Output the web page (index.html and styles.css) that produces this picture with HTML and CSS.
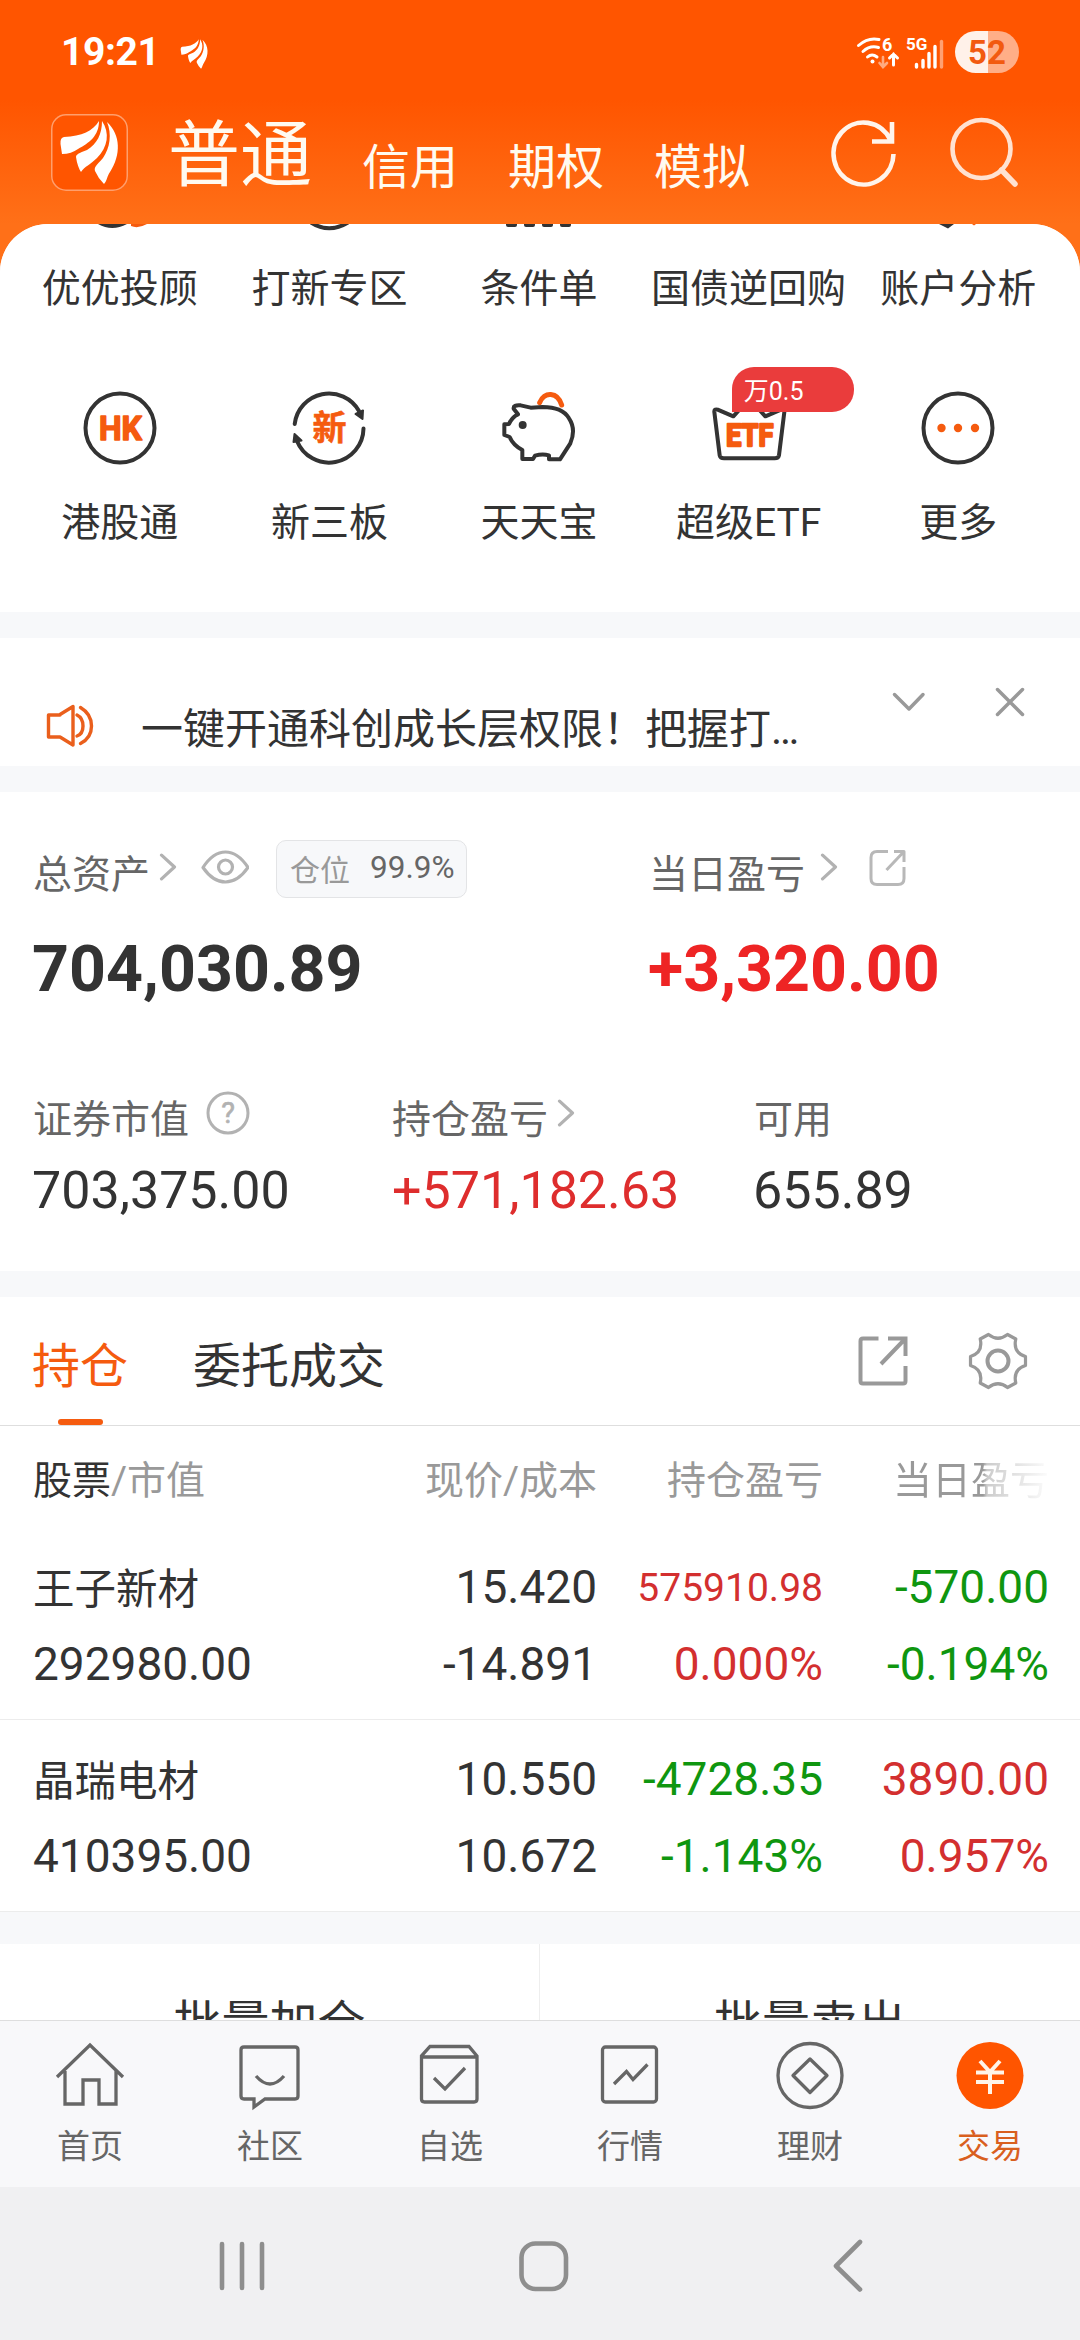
FILE: index.html
```html
<!DOCTYPE html>
<html lang="zh-CN">
<head>
<meta charset="utf-8">
<title>交易</title>
<link rel="stylesheet" href="styles.css">
</head>
<body>
<svg width="0" height="0" class="defs">
  <symbol id="petals" viewBox="0 0 77 77"><path d="M48 7C42 17 31 22 13 23Q9 23.500 9.500 30L11 40C17 40 23 38 27 35C38 29 48 22 48 7ZM51 7C51 20 46 30 36 36Q24 40 25 43C26 50 28 55 30 58C34 52 39 51 46 44C57 33 59 19 51 7ZM56 8C61 20 59 34 52 44C45 52 43 53 44 57Q47 64 53 70C56 67 56 62 59 58C70 41 70 21 56 8Z"/></symbol>
  <symbol id="chevron" viewBox="0 0 16 26"><path d="M2 2L14 13L2 24" fill="none" stroke="#b2b2b2" stroke-width="3" stroke-linecap="round" stroke-linejoin="round"/></symbol>
</svg>
<div class="screen">
  <header class="header">
    <div class="status">
      <span class="time">19:21</span>
      <svg class="status-logo" viewBox="8 5 62 67" fill="#fff"><use href="#petals" width="77" height="77"/></svg>
      <svg class="signals" width="100" height="42" viewBox="850 31 100 42" fill="none" stroke="#fff" stroke-linecap="round">
        <path d="M858.500 45.500Q868 37 879 39.500M863 51.500Q870 45 878.500 47.500M867.500 57Q872 53 877 57" stroke-width="3"/>
        <circle cx="872.500" cy="61.500" r="2" fill="#fff" stroke="none"/>
        <path d="M883 57V66M879.500 63L883 67L887 63" stroke-width="2.600" opacity=".5"/>
        <path d="M893.500 65V54M889.500 58L893.500 54L897.500 58" stroke-width="3"/>
        <path d="M916.500 67V64.500M923 67V60.500M929 67V53.500M935 67V46.500" stroke-width="3.400"/>
        <path d="M941.500 67V41.500" stroke-width="3.400" opacity=".45"/>
        <text class="sig-text" x="882" y="50.500" font-size="18">6</text>
        <text class="sig-text" x="906" y="49.500" font-size="17">5G</text>
      </svg>
      <span class="battery">52</span>
    </div>
    <nav class="accounts">
      <span class="app-logo"><svg width="77" height="77" fill="#fff"><use href="#petals"/></svg></span>
      <span class="account current">普通</span>
      <span class="account">信用</span>
      <span class="account">期权</span>
      <span class="account">模拟</span>
      <svg class="refresh" width="68" height="72" viewBox="829 117 68 72" fill="none" stroke="#fff4ec" stroke-width="4.600"><path d="M890.500 140A30 31 0 1 0 893.500 154M892 122V141.500H872"/></svg>
      <svg class="search" width="70" height="72" viewBox="949 115 70 72" fill="none" stroke="#ffe2d1" stroke-width="4.600"><circle cx="981.500" cy="149" r="29"/><path d="M1001.500 170L1015 184" stroke-width="5.500" stroke-linecap="round"/></svg>
    </nav>
  </header>

  <main class="sheet">
    <section class="shortcuts">
      <div class="shortcut">
        <svg class="stub" width="80" height="8" viewBox="80 224 80 8"><path d="M98 224Q112 232 127 224Z" fill="#333"/><path d="M131 224V226Q138 229 147 224Z" fill="#f55b0f"/></svg>
        <span>优优投顾</span>
      </div>
      <div class="shortcut">
        <svg class="stub" width="80" height="8" viewBox="290 224 80 8"><path d="M312 222.500Q330 234 349 222.500" fill="none" stroke="#333" stroke-width="4"/></svg>
        <span>打新专区</span>
      </div>
      <div class="shortcut">
        <svg class="stub" width="80" height="8" viewBox="500 224 80 8" fill="#333"><rect x="507" y="219" width="11" height="8" rx="2"/><rect x="525" y="219" width="11" height="8" rx="2"/><rect x="543" y="219" width="11" height="8" rx="2"/><rect x="561" y="219" width="11" height="8" rx="2"/></svg>
        <span>条件单</span>
      </div>
      <div class="shortcut">
        <svg class="stub" width="80" height="8"></svg>
        <span>国债逆回购</span>
      </div>
      <div class="shortcut">
        <svg class="stub" width="80" height="8" viewBox="918 224 80 8"><path d="M939 224L948 228.500L954 224Z" fill="#333"/><path d="M972 224H976L974 225.500Z" fill="#f55b0f"/></svg>
        <span>账户分析</span>
      </div>
      <div class="shortcut">
        <svg class="icon" viewBox="0 0 80 80"><circle cx="40" cy="40" r="34.500" fill="none" stroke="#333" stroke-width="4"/><text class="icon-text" x="40.500" y="52" font-size="34" stroke-width="1.500" textLength="43" lengthAdjust="spacingAndGlyphs">HK</text></svg>
        <span>港股通</span>
      </div>
      <div class="shortcut">
        <svg class="icon" viewBox="0 0 80 80"><g fill="none" stroke="#333" stroke-width="4" stroke-linecap="round"><path d="M5.700 36A34.500 34.500 0 0 1 70 23"/><path d="M74.500 40.500A34.500 34.500 0 0 1 8 53"/></g><path d="M66.500 26L74 22.500L73.500 31ZM5.500 46L12.500 52.500L4.500 54Z" fill="#333" stroke="#333" stroke-width="2" stroke-linejoin="round"/><text class="icon-text" x="40.500" y="52" font-size="34" stroke-width=".6">新</text></svg>
        <span>新三板</span>
      </div>
      <div class="shortcut">
        <svg class="icon" viewBox="60 54 240 240" fill="none" stroke="#333" stroke-width="12" stroke-linejoin="round" stroke-linecap="round"><path d="M182 98C195 63 236 65 248 105" stroke="#f55b0f" stroke-width="15"/><path d="M117 133L104 116Q102 104 125 106L155 113L190 111C230 112 255 120 270 145Q292 178 274 220L243 268H210V256Q190 251 168 257L162 267H130V240Q102 225 92 201L76 195V163L90 162Q100 140 117 133Z"/><circle cx="131" cy="165" r="12" fill="#333" stroke="none"/></svg>
        <span>天天宝</span>
      </div>
      <div class="shortcut">
        <svg class="icon" viewBox="687 54 240 240"><path d="M719 256L703 126Q702 116 713 119L760 139L808 86L856 139L903 119Q914 116 913 126L897 256Q895 265 884 265H732Q721 265 719 256Z" fill="none" stroke="#333" stroke-width="12" stroke-linejoin="round"/><text class="icon-text" x="809" y="229" font-size="95" stroke-width="7" textLength="142" lengthAdjust="spacingAndGlyphs">ETF</text></svg>
        <span>超级ETF</span>
        <b class="rate">万0.5</b>
      </div>
      <div class="shortcut">
        <svg class="icon" viewBox="0 0 80 80"><circle cx="40" cy="40" r="34.500" fill="none" stroke="#333" stroke-width="4"/><g fill="#f55b0f"><circle cx="23.500" cy="40" r="4.200"/><circle cx="40" cy="40" r="4.200"/><circle cx="57" cy="40" r="4.200"/></g></svg>
        <span>更多</span>
      </div>
    </section>

    <section class="notice">
      <svg class="speaker" width="50" height="44" viewBox="45 704 50 44" fill="none" stroke="#ea5f1c" stroke-width="3.400" stroke-linecap="round" stroke-linejoin="round"><path d="M60 714.500L73 706.500V745L60 737H48.500V715H60M77 715Q83 718 83 726T77 736M80.500 707.500Q91.500 714 91.500 726T80.500 743.500"/></svg>
      <span class="notice-text">一键开通科创成长层权限！把握打…</span>
      <svg class="expand" width="36" height="24" viewBox="0 0 36 24"><path d="M3.500 4.500L18 19L32 4.500" fill="none" stroke="#999" stroke-width="3.500" stroke-linecap="round" stroke-linejoin="round"/></svg>
      <svg class="close" width="32" height="32" viewBox="0 0 32 32"><path d="M3.500 3.500L28.500 28.500M28.500 3.500L3.500 28.500" stroke="#999" stroke-width="3.500" stroke-linecap="round"/></svg>
    </section>

    <section class="assets">
      <div class="totals">
        <div>
          <div class="label">总资产<svg class="chev" width="18" height="28"><use href="#chevron"/></svg>
            <svg class="eye" width="48" height="34" viewBox="0 0 48 34" fill="none" stroke="#b2b2b2" stroke-width="3.200"><path d="M2 17.500Q12 2 24.500 2T47 17.500Q37 32 24.500 32T2 17.500Z" stroke-linejoin="round"/><circle cx="24.500" cy="17" r="7"/></svg>
            <span class="ratio">仓位<em>99.9%</em></span>
          </div>
          <div class="big">704,030.89</div>
        </div>
        <div>
          <div class="label">当日盈亏<svg class="chev wide" width="18" height="28"><use href="#chevron"/></svg>
            <svg class="share-sm" width="37" height="38" viewBox="0 0 37 38" fill="none" stroke="#b8b8b8" stroke-width="3"><path d="M19 2.500H8Q2 2.500 2 8.500V29.500Q2 35.500 8 35.500H29Q35 35.500 35 29.500V18M25 2.500H35V13M34.500 3L17.500 21" stroke-linejoin="round"/></svg>
          </div>
          <div class="big gain">+3,320.00</div>
        </div>
      </div>
      <div class="details">
        <div>
          <div class="label">证券市值<svg class="help" width="44" height="44" viewBox="0 0 44 44"><circle cx="22" cy="22" r="20" fill="none" stroke="#b2b2b2" stroke-width="3"/><text x="22" y="32" text-anchor="middle" font-size="29" fill="#b2b2b2" stroke="#b2b2b2" stroke-width=".6">?</text></svg></div>
          <div class="amount">703,375.00</div>
        </div>
        <div>
          <div class="label">持仓盈亏<svg class="chev" width="18" height="28"><use href="#chevron"/></svg></div>
          <div class="amount red">+571,182.63</div>
        </div>
        <div>
          <div class="label">可用</div>
          <div class="amount">655.89</div>
        </div>
      </div>
    </section>

    <section class="positions">
      <div class="tabs">
        <span class="tab active">持仓</span>
        <span class="tab">委托成交</span>
        <svg class="share" width="52" height="52" viewBox="0 0 52 52" fill="none" stroke="#999" stroke-width="4"><path d="M21.500 3.500H6Q3.500 3.500 3.500 6V46Q3.500 48.500 6 48.500H46Q48.500 48.500 48.500 46V31M31 3.500H48.500V21M48 4L24 29"/></svg>
        <svg class="gear" width="60" height="60" viewBox="-30 -30 60 60" fill="none" stroke="#999" stroke-width="3.200" stroke-linejoin="round"><path d="M27.500 4.500Q14.700 8.500 17.800 22L9.500 26.500Q0 19 -9.500 26.500L-17.800 22Q-14.700 8.500 -27.500 4.500V-4.500Q-14.700 -8.500 -17.800 -22L-9.500 -26.500Q0 -19 9.500 -26.500L17.800 -22Q14.700 -8.500 27.500 -4.500Z"/><circle r="10.500" stroke-width="4"/></svg>
      </div>
      <div class="row head">
        <span><i>股票</i>/市值</span><span>现价/成本</span><span>持仓盈亏</span><span class="fade">当日盈亏</span>
      </div>
      <div class="row">
        <span class="name">王子新材</span><span>15.420</span><span class="up small">575910.98</span><span class="down">-570.00</span>
        <span>292980.00</span><span>-14.891</span><span class="up">0.000%</span><span class="down">-0.194%</span>
      </div>
      <div class="row">
        <span class="name">晶瑞电材</span><span>10.550</span><span class="down">-4728.35</span><span class="up">3890.00</span>
        <span>410395.00</span><span>10.672</span><span class="down">-1.143%</span><span class="up">0.957%</span>
      </div>
    </section>

    <section class="batch"><span>批量加仓</span><span>批量卖出</span></section>
  </main>

  <nav class="tabbar">
    <div class="tabitem"><svg viewBox="0 0 72 72"><path d="M3 36L36 4L69 36M11 30V63H29V39H45V63H62V30"/></svg><span>首页</span></div>
    <div class="tabitem"><svg viewBox="0 0 72 72"><path d="M10 6H61Q64 6 64 9V55Q64 58 61 58H31L20 66V58H10Q7 58 7 55V9Q7 6 10 6ZM22 35Q36 51 50 35"/></svg><span>社区</span></div>
    <div class="tabitem"><svg viewBox="0 0 72 72"><path d="M7.500 15V58Q7.500 61 10.500 61H60Q63 61 63 58V15L55 5.500H16ZM8 16H63M20 37L31 48L51 27"/></svg><span>自选</span></div>
    <div class="tabitem"><svg viewBox="0 0 72 72"><rect x="8.500" y="6" width="54" height="55" rx="3"/><path d="M20 43L32.500 30.500L39 38.500L53.500 23.500"/></svg><span>行情</span></div>
    <div class="tabitem"><svg viewBox="0 0 72 72"><circle cx="36" cy="34.500" r="32"/><path d="M36 18L53 34.500L36 51.500L19 34.500Z" stroke-linejoin="round"/></svg><span>理财</span></div>
    <div class="tabitem on"><svg viewBox="0 0 72 72"><circle cx="36" cy="34.500" r="33.500" class="disc"/><path d="M26 20L36 31L46 20M22 31.500H50M22 41H50M36 31V53" class="yen"/></svg><span>交易</span></div>
  </nav>
  <nav class="sysnav">
    <svg viewBox="0 0 1080 153" fill="none" stroke="#8e8e8e" stroke-width="4.600" stroke-linecap="round" stroke-linejoin="round"><path d="M222 57V101M242 57V101M262 57V101M860 55L836 79L860 102.500"/><rect x="521.500" y="56.500" width="44.500" height="45.500" rx="14"/></svg>
  </nav>
</div>
</body>
</html>
```
FILE: styles.css
```css
* { box-sizing: border-box; }
body {
  margin: 0;
  font-family: Roboto, "Noto Sans CJK SC", sans-serif;
  color: #333;
}
svg { flex: none; display: block; }
.defs { position: absolute; }
.screen {
  width: 1080px;
  height: 2340px;
  display: flex;
  flex-direction: column;
  overflow: hidden;
  background: linear-gradient(#ff5500 100px, #ff7018 224px);
}

/* header */
.header { height: 224px; flex: none; }
.status { display: flex; align-items: center; height: 104px; padding: 0 61px; }
.time {
  color: #fff;
  font-size: 39px;
  font-weight: 700;
  letter-spacing: -.4px;
  width: 119px;
}
.status-logo { width: 29px; height: 34px; margin-top: 3px; }
.signals { margin-left: auto; margin-right: 5px; }
.sig-text { font-weight: 700; fill: #fff; stroke: none; }
.battery {
  width: 64px;
  height: 42px;
  border-radius: 21px;
  background: linear-gradient(90deg, #fff1e9 33px, #ffae87 33px);
  color: #f25a10;
  font-size: 33px;
  font-weight: 700;
  line-height: 43px;
  text-align: center;
}
.accounts { display: flex; height: 120px; padding: 10px 61px 0 51px; color: #fffaf0; }
.app-logo {
  width: 77px;
  height: 77px;
  border-radius: 15px;
  background: #ff5500;
  box-shadow: inset 0 0 0 1.500px #ff9f6c;
  margin-right: 40px;
}
.account { font-size: 48px; line-height: 60px; margin: 24px 50px 0 0; }
.account.current { font-size: 72px; line-height: 84px; margin-top: 0; }
.refresh { margin: 3px 0 0 29px; }
.search { margin: 1px 0 0 auto; }

/* content sheet */
.sheet {
  flex: 1;
  min-height: 0;
  overflow: hidden;
  display: flex;
  flex-direction: column;
  gap: 26px;
  background: #f7f8fa;
  border-radius: 48px 48px 0 0;
}
.sheet > section { flex: none; background: #fff; }

.shortcuts {
  height: 388px;
  padding: 0 17px 0 15px;
  display: grid;
  grid-template-columns: repeat(5, 1fr);
  grid-template-rows: 164px 1fr;
}
.shortcut {
  position: relative;
  display: flex;
  flex-direction: column;
  align-items: center;
  font-size: 39px;
  line-height: 50px;
  white-space: nowrap;
}
.stub { margin-bottom: 32px; }
.icon { width: 80px; height: 80px; margin-bottom: 30px; }
.icon-text {
  font-weight: 700;
  fill: #f55b0f;
  stroke: #f55b0f;
  stroke-linejoin: round;
  text-anchor: middle;
}
.rate {
  position: absolute;
  left: 88px;
  top: -21px;
  width: 122px;
  height: 45px;
  padding-left: 12px;
  border-radius: 22px 22px 22px 0;
  background: #ea3c3c;
  color: #fff;
  font-size: 25px;
  font-weight: 400;
  line-height: 49px;
}

.notice { display: flex; height: 128px; padding: 0 54px 0 45px; }
.speaker { margin-top: 66px; }
.notice-text { margin: 66px 0 0 46px; font-size: 42px; line-height: 52px; white-space: nowrap; }
.expand { margin: 52px 0 0 auto; }
.close { margin: 48px 0 0 67px; }

/* assets */
.assets { height: 479px; padding-top: 48px; }
.totals { display: grid; grid-template-columns: 616px 1fr; padding-left: 33px; }
.label { display: flex; height: 58px; align-items: center; font-size: 39px; color: #666; padding-top: 4px; }
.label svg { position: relative; }
.chev { margin: -8px 0 0 9px; }
.chev.wide { margin-left: 15px; }
.eye { margin: -8px 0 0 24px; }
.share-sm { margin: -7px 0 0 31px; }
.ratio {
  display: flex;
  align-items: center;
  height: 58px;
  margin: -5px 0 0 27px;
  padding: 0 11px 2px 13px;
  border: 1px solid #e3e4e6;
  border-radius: 10px;
  background: #f7f8fa;
  color: #999;
  font-size: 30px;
}
.ratio em { font-style: normal; font-size: 31.500px; color: #666; margin-left: 20px; }
.big { font-size: 64.500px; font-weight: 700; line-height: 80px; margin: 31px 0 0 -1px; }
.gain { color: #ee2424; }
.details { display: grid; grid-template-columns: 359px 362px 1fr; padding: 76px 0 0 33px; }
.help { margin: -7px 0 0 17px; }
.details .chev { margin-top: -7px; }
.amount { font-size: 52px; line-height: 60px; margin: 18px 0 0 -1px; }
.red { color: #de2d2d; margin-left: 0; }

/* positions */
.tabs { display: flex; height: 129px; padding: 0 52px 0 33px; border-bottom: 1px solid #dedede; }
.tab { position: relative; font-size: 48px; line-height: 60px; padding-top: 40px; margin-right: 64px; }
.tab.active { color: #f55b0f; margin-left: -1px; margin-right: 65px; }
.tab.active::after {
  content: "";
  position: absolute;
  left: 26px;
  bottom: 0;
  width: 45px;
  height: 6px;
  border-radius: 3px;
  background: #f55b0f;
}
.share { margin: 38px 0 0 auto; }
.gear { margin: 34px 0 0 59px; }
.row {
  display: grid;
  grid-template-columns: 300px 264px 226px 226px;
  align-content: start;
  padding: 21px 31px 0 33px;
  height: 192px;
  border-bottom: 1px solid #ececec;
  font-size: 46px;
  line-height: 77px;
}
.row span { text-align: right; white-space: nowrap; }
.row span:nth-child(4n + 1) { text-align: left; }
.row .name { font-size: 41.500px; line-height: 82px; height: 77px; }
.row .small { font-size: 39px; line-height: 79px; height: 77px; }
.row.head { height: 102px; padding-top: 17px; border: 0; font-size: 39px; color: #999; }
.row i { font-style: normal; color: #333; }
.up { color: #d32f2f; }
.down { color: #0f960f; }
.row .fade {
  color: transparent;
  background: linear-gradient(90deg, #999 160px, #ccc 164px, #fff 230px);
  -webkit-background-clip: text;
  background-clip: text;
}

.batch {
  display: grid;
  grid-template-columns: 540px 540px;
  height: 120px;
  margin-top: 6px;
  font-size: 48px;
  line-height: 60px;
  text-align: center;
}
.batch span { padding-top: 50px; }
.batch span:first-child { border-right: 1px solid #eee; }

/* bottom bars */
.tabbar {
  flex: none;
  display: grid;
  grid-template-columns: repeat(6, 1fr);
  height: 167px;
  border-top: 1px solid #dedede;
  background: #f8f8fa;
}
.tabitem {
  display: flex;
  flex-direction: column;
  align-items: center;
  padding-top: 20px;
  font-size: 33px;
  line-height: 44px;
  color: #666;
}
.tabitem svg { width: 72px; height: 72px; margin-bottom: 12px; fill: none; stroke: #666; stroke-width: 3.300px; }
.tabitem.on { color: #d95f1e; }
.tabitem .disc { fill: #ff5500; stroke: none; }
.tabitem .yen { stroke: #fff4e8; stroke-width: 4px; }
.sysnav { flex: none; height: 153px; background: #f0f0f2; }
```
